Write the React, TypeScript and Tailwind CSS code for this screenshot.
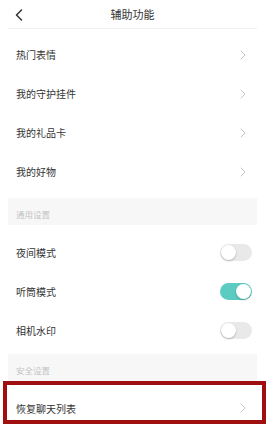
import React from 'react'

const font = { fontFamily: '"Noto Sans CJK SC", "Noto Sans", sans-serif' }

const Chevron = () => (
  <svg width="6" height="10" viewBox="0 0 6 10" fill="none" className="shrink-0">
    <path d="M1 1l4 4-4 4" stroke="#c4c4c4" strokeWidth="1" strokeLinecap="round" strokeLinejoin="round" />
  </svg>
)

const Toggle = ({ on }: { on: boolean }) => (
  <div
    className={
      on
        ? 'flex h-[17px] w-[32px] items-center justify-end rounded-full bg-[#5ccbc1] px-[1px]'
        : 'flex h-[17px] w-[32px] items-center justify-start rounded-full bg-[#e9e9e9] px-[1px]'
    }
  >
    <div className="h-[15px] w-[15px] rounded-full bg-white shadow-[0_1px_2px_rgba(0,0,0,0.25)]" />
  </div>
)

const LinkRow = ({ label, h = 'h-[39px]' }: { label: string; h?: string }) => (
  <div className={`flex ${h} items-center justify-between pl-2 pr-[11px]`}>
    <span className="text-[10px] text-[#333]">{label}</span>
    <Chevron />
  </div>
)

const ToggleRow = ({ label, on }: { label: string; on: boolean }) => (
  <div className="flex h-[39px] items-center justify-between pl-2 pr-[5px]">
    <span className="text-[10px] text-[#333]">{label}</span>
    <Toggle on={on} />
  </div>
)

const SectionHead = ({ label }: { label: string }) => (
  <div className="flex h-[27px] items-end bg-[#f7f7f7] px-2 pb-[4px]">
    <span className="text-[8.5px] text-[#c4c4c4]">{label}</span>
  </div>
)

export default function App() {
  return (
    <div className="relative h-[432px] w-[275px] overflow-hidden bg-white" style={font}>
      <div className="ml-2 w-[249px]">
        <div className="relative flex h-[29px] items-center justify-center border-b border-[#f0f0f0]">
          <svg width="8" height="12" viewBox="0 0 8 12" fill="none" className="absolute left-[7px] top-[9px]">
            <path d="M6.5 1L1.5 6l5 5" stroke="#333" strokeWidth="1.5" strokeLinecap="round" strokeLinejoin="round" />
          </svg>
          <span className="text-[11px] text-[#333]">辅助功能</span>
        </div>
        <div className="h-[6px]" />
        <LinkRow label="热门表情" />
        <LinkRow label="我的守护挂件" />
        <LinkRow label="我的礼品卡" />
        <LinkRow label="我的好物" />
        <div className="h-[7px]" />
        <SectionHead label="通用设置" />
        <div className="h-[8px]" />
        <ToggleRow label="夜间模式" on={false} />
        <ToggleRow label="听筒模式" on={true} />
        <ToggleRow label="相机水印" on={false} />
        <div className="h-[4px]" />
        <SectionHead label="安全设置" />
        <LinkRow label="恢复聊天列表" h="h-[54px]" />
      </div>
      <div className="pointer-events-none absolute left-[3px] top-[381px] h-[43px] w-[263px] border-4 border-[#a00f0f]" />
    </div>
  )
}
